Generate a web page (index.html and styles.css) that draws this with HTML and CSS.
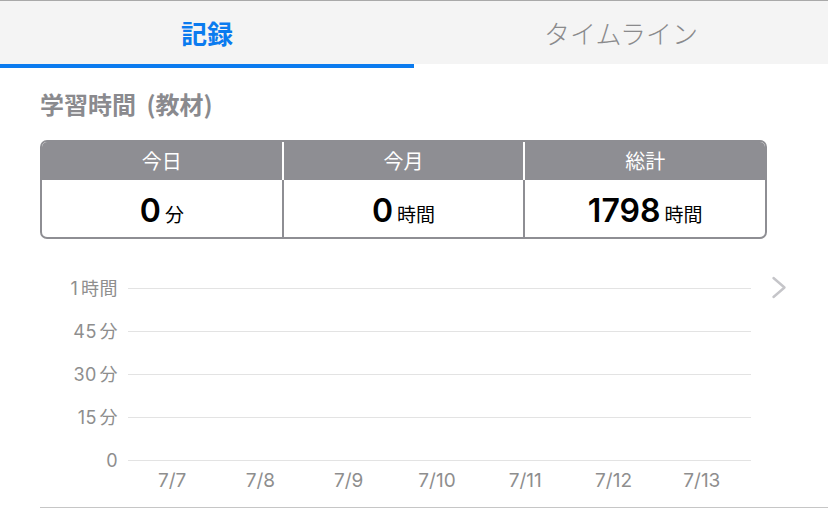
FILE: index.html
```html
<!DOCTYPE html>
<html lang="ja">
<head>
<meta charset="utf-8">
<link rel="stylesheet" href="styles.css">
</head>
<body>
<div class="topline"></div>
<nav class="tabs">
  <div class="tab active">記録</div>
  <div class="tab">タイムライン</div>
</nav>
<h2 class="heading">学習時間 (教材)</h2>
<div class="summary">
  <div class="srow head">
    <div class="hcell">今日</div>
    <div class="hcell">今月</div>
    <div class="hcell">総計</div>
  </div>
  <div class="srow body">
    <div class="bcell"><span class="num">0</span><span class="unit">分</span></div>
    <div class="bcell"><span class="num">0</span><span class="unit">時間</span></div>
    <div class="bcell"><span class="num">1798</span><span class="unit">時間</span></div>
  </div>
</div>
<div class="chart">
  <div class="plot">
    <div class="grow"><span class="ylab">1 時間</span><span class="gline"></span></div>
    <div class="grow"><span class="ylab">45 分</span><span class="gline"></span></div>
    <div class="grow"><span class="ylab">30 分</span><span class="gline"></span></div>
    <div class="grow"><span class="ylab">15 分</span><span class="gline"></span></div>
    <div class="grow last"><span class="ylab">0</span><span class="gline"></span></div>
    <div class="xlabels">
      <span>7/7</span><span>7/8</span><span>7/9</span><span>7/10</span><span>7/11</span><span>7/12</span><span>7/13</span>
    </div>
  </div>
  <svg class="chev" width="16" height="24" viewBox="0 0 16 24"><polyline points="2.5,2 13.5,11.5 2.5,21" fill="none" stroke="#c5c5c9" stroke-width="2.4" stroke-linecap="round" stroke-linejoin="round"/></svg>
</div>
<div class="bottomline"></div>
</body>
</html>
```
FILE: styles.css
```css
* { box-sizing: border-box; }
html, body {
  margin: 0;
  padding: 0;
  background: #fff;
  width: 828px;
  height: 517px;
  overflow: hidden;
  font-family: Inter, "Noto Sans CJK JP", sans-serif;
}
.topline {
  height: 1px;
  background: #a9a9a9;
}
.tabs {
  display: flex;
  align-items: flex-start;
  height: 67px;
}
.tab {
  flex: 1;
  height: 63px;
  background: #f4f4f4;
  display: flex;
  align-items: center;
  justify-content: center;
  font-family: "Noto Sans CJK JP", sans-serif;
  font-size: 26px;
  font-weight: 300;
  color: #8a8a8c;
}
.tab.active {
  height: 67px;
  border-bottom: 4px solid #0b7bef;
  color: #0b7bef;
  font-weight: 700;
  font-size: 26px;
}
.heading {
  margin: 0;
  padding: 20px 0 0 40px;
  font-family: "Noto Sans CJK JP", sans-serif;
  font-size: 24px;
  line-height: 32px;
  font-weight: 700;
  word-spacing: 5px;
  color: #8a8a8e;
}
.summary {
  margin: 20px 0 0 40px;
  width: 727px;
  border: 2px solid #8e8e93;
  border-radius: 7px;
  overflow: hidden;
}
.srow {
  display: grid;
  grid-template-columns: 1fr 1fr 1fr;
  gap: 2px;
}
.head { background: #fff; }
.body { background: #8e8e93; }
.hcell {
  height: 38px;
  background: #8e8e93;
  color: #fff;
  font-family: "Noto Sans CJK JP", sans-serif;
  font-size: 20px;
  font-weight: 400;
  line-height: 38px;
  text-align: center;
}
.bcell {
  height: 57px;
  background: #fff;
  display: flex;
  justify-content: center;
  align-items: baseline;
  padding-top: 13px;
  color: #000;
}
.num {
  font-family: Inter, sans-serif;
  font-size: 32px;
  font-weight: 600;
  line-height: 36px;
}
.unit {
  font-family: "Noto Sans CJK JP", sans-serif;
  font-size: 19px;
  margin-left: 4px;
}
.chart {
  display: flex;
  align-items: flex-start;
  margin: 49px 0 0 40px;
}
.plot {
  display: flex;
  flex-direction: column;
}
.grow {
  display: flex;
  align-items: flex-start;
  height: 43px;
}
.grow.last { height: 1px; }
.ylab {
  width: 78px;
  margin-right: 10px;
  margin-top: -10px;
  text-align: right;
  font-size: 18px;
  line-height: 22px;
  letter-spacing: 0.5px;
  word-spacing: -3px;
  color: #8e8e8e;
  white-space: nowrap;
}
.gline {
  width: 623px;
  height: 1px;
  background: #e3e3e3;
}
.xlabels {
  display: flex;
  width: 618px;
  margin: 9px 0 0 88px;
}
.xlabels span {
  flex: 1;
  text-align: center;
  font-size: 19px;
  line-height: 22px;
  color: #8e8e8e;
}
.chev {
  margin: -12px 0 0 20px;
}
.bottomline {
  margin: 15px 0 0 40px;
  height: 1px;
  background: #c6c6c6;
}
```
